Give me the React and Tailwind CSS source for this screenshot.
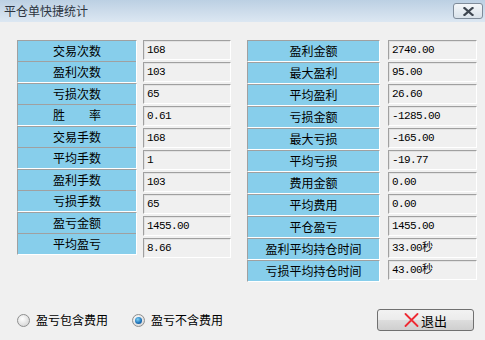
import React from 'react'

const leftGroups = [
  [['交易次数', '168'], ['盈利次数', '103']],
  [['亏损次数', '65'], ['胜\u3000\u3000率', '0.61']],
  [['交易手数', '168'], ['平均手数', '1']],
  [['盈利手数', '103'], ['亏损手数', '65']],
  [['盈亏金额', '1455.00'], ['平均盈亏', '8.66']],
]

const rightRows = [
  ['盈利金额', '2740.00'],
  ['最大盈利', '95.00'],
  ['平均盈利', '26.60'],
  ['亏损金额', '-1285.00'],
  ['最大亏损', '-165.00'],
  ['平均亏损', '-19.77'],
  ['费用金额', '0.00'],
  ['平均费用', '0.00'],
  ['平仓盈亏', '1455.00'],
  ['盈利平均持仓时间', '33.00秒'],
  ['亏损平均持仓时间', '43.00秒'],
]

const sunken = 'border border-t-[#a0a0a0] border-l-[#a0a0a0] border-r-white border-b-white'

function ValueBox({ v }) {
  return (
    <div className={`h-[20px] mb-[2px] flex items-center pl-[3px] ${sunken} shadow-[inset_1px_1px_0_#e2e2e2] font-['Liberation_Mono','Noto_Sans_CJK_SC',monospace] text-[11px] tracking-[-0.6px] text-black`}>
      {v}
    </div>
  )
}

function Radio({ checked, label }) {
  return (
    <div className="flex items-center gap-[6px]">
      <span className="w-[13px] h-[13px] rounded-full border border-[#8e8f8f] bg-[radial-gradient(circle_at_40%_35%,#ffffff,#dcdcdc_70%,#c8c8c8)] flex items-center justify-center">
        {checked && (
          <span className="w-[7px] h-[7px] rounded-full bg-[radial-gradient(circle_at_40%_35%,#7fd3f7,#1b6fb5_60%,#0d4a8a)]" />
        )}
      </span>
      <span className="text-[12px] text-black leading-none">{label}</span>
    </div>
  )
}

export default function App() {
  return (
    <div className="w-[485px] h-[340px] bg-[#f0f0f0] flex flex-col overflow-hidden font-['Noto_Sans_CJK_SC',sans-serif]">
      {/* Title bar */}
      <div className="h-[22px] flex items-center justify-between pl-[4px] pr-[2px] bg-[linear-gradient(#bcd0e3,#dce7f2)]">
        <span className="text-[12px] text-[#2c3440] leading-none">平仓单快捷统计</span>
        <button className="w-[30px] h-[16px] rounded-[3px] border border-[#7f8c9a] bg-[linear-gradient(#f4f7fa,#d9e2ea)] flex items-center justify-center">
          <svg width="11" height="9" viewBox="0 0 11 9">
            <path d="M1.5 1 L9.5 8 M9.5 1 L1.5 8" stroke="#3d4650" strokeWidth="2.2" strokeLinecap="square" />
          </svg>
        </button>
      </div>

      {/* Tables */}
      <div className="flex pt-[18px] pl-[17px]">
        <div className="flex gap-[6px]">
          <div className="w-[120px] flex flex-col">
            {leftGroups.map((g, i) => (
              <div key={i} className={`${sunken} bg-[#87ceeb]`}>
                <div className="h-[21px] border-b border-[#a0a0a0] flex items-center justify-center text-[12px] leading-none text-black">{g[0][0]}</div>
                <div className="h-[20px] flex items-center justify-center text-[12px] leading-none text-black">{g[1][0]}</div>
              </div>
            ))}
          </div>
          <div className="w-[88px] flex flex-col">
            {leftGroups.flat().map(([, v], i) => (
              <ValueBox key={i} v={v} />
            ))}
          </div>
        </div>

        <div className="flex gap-[8px] ml-[16px]">
          <div className="w-[133px] flex flex-col">
            {rightRows.map(([l], i) => (
              <div key={i} className={`h-[22px] ${sunken} bg-[#87ceeb] flex items-center justify-center text-[12px] leading-none text-black`}>
                {l}
              </div>
            ))}
          </div>
          <div className="w-[89px] flex flex-col">
            {rightRows.map(([, v], i) => (
              <ValueBox key={i} v={v} />
            ))}
          </div>
        </div>
      </div>

      {/* Bottom */}
      <div className="mt-auto mb-[9px] h-[22px] flex items-center pl-[17px] pr-[11px]">
        <Radio label="盈亏包含费用" />
        <div className="ml-[24px]">
          <Radio checked label="盈亏不含费用" />
        </div>
        <button className="ml-auto w-[97px] h-[22px] rounded-[3px] border border-[#707070] bg-[linear-gradient(#f2f2f2_0%,#ebebeb_50%,#dddddd_51%,#cfcfcf_100%)] flex items-center justify-center gap-[2px]">
          <svg width="15" height="14" viewBox="0 0 15 14">
            <path d="M1.5 1 L13.5 13 M13.5 1 L1.5 13" stroke="#ee2a33" strokeWidth="1.8" strokeLinecap="round" />
          </svg>
          <span className="text-[13px] text-black leading-none">退出</span>
        </button>
      </div>
    </div>
  )
}
